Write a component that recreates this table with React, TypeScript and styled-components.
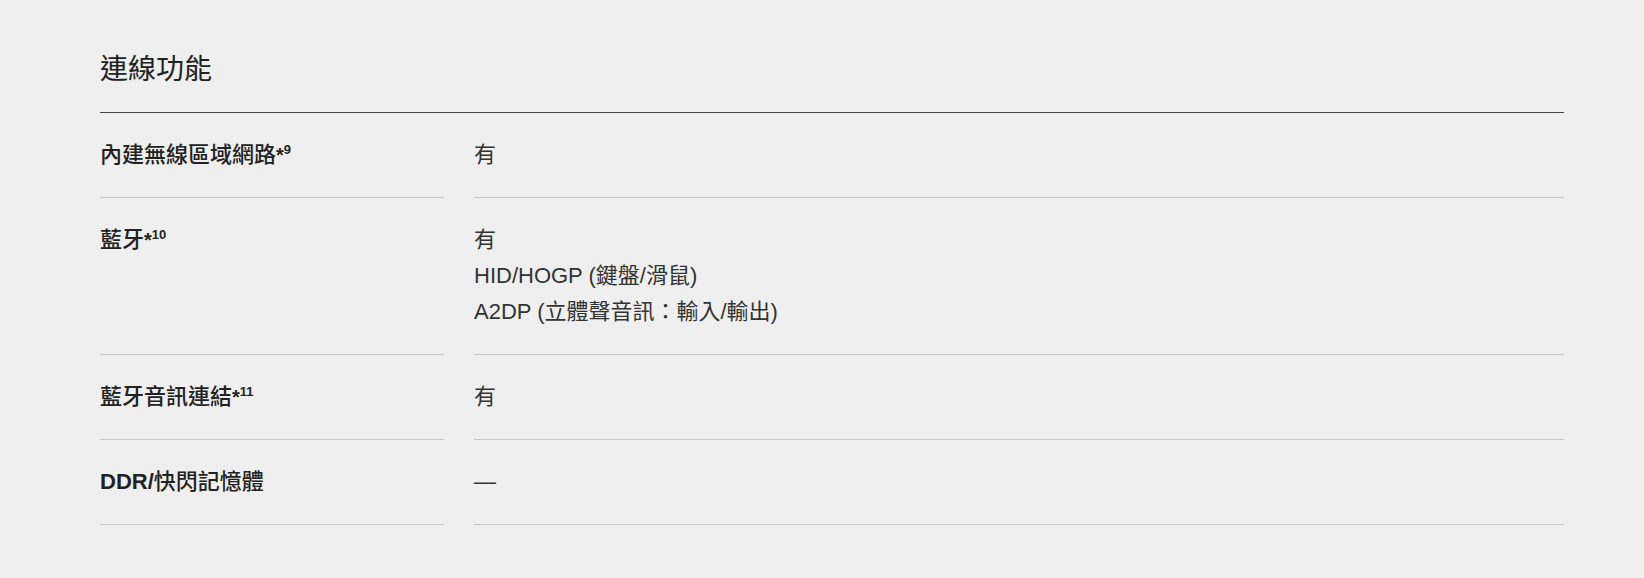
import React from 'react';
import styled, { createGlobalStyle } from 'styled-components';

const GlobalStyle = createGlobalStyle`
  html, body {
    margin: 0;
    padding: 0;
    background: #efefef;
  }

  body {
    font-family: "Liberation Sans", "Noto Sans CJK TC", sans-serif;
    color: #333;
  }
`;

interface Spec {
  label: React.ReactNode;
  note?: string;
  values: string[];
}

const specs: Spec[] = [
  { label: '內建無線區域網路', note: '9', values: ['有'] },
  { label: '藍牙', note: '10', values: ['有', 'HID/HOGP (鍵盤/滑鼠)', 'A2DP (立體聲音訊：輸入/輸出)'] },
  { label: '藍牙音訊連結', note: '11', values: ['有'] },
  { label: <><Latin>DDR/</Latin>快閃記憶體</>, values: ['—'] }
];

function Latin ({ children }: { children: React.ReactNode }): React.ReactElement {
  return <LatinText>{children}</LatinText>;
}

function App (): React.ReactElement {
  return (
    <Page>
      <GlobalStyle />
      <Section>
        <Heading>連線功能</Heading>
        <SpecGrid>
          {specs.map((spec, i) => (
            <React.Fragment key={i}>
              <Cell>
                <Label>
                  {spec.label}
                  {spec.note && (
                    <Note>
                      <Star>*</Star>
                      <sup>{spec.note}</sup>
                    </Note>
                  )}
                </Label>
              </Cell>
              <Cell>
                {spec.values.map((v) => (
                  <ValueLine key={v}>{v}</ValueLine>
                ))}
              </Cell>
            </React.Fragment>
          ))}
        </SpecGrid>
      </Section>
    </Page>
  );
}

export default App;

const Page = styled.div`
  padding: 52px 80px 40px 100px;
`;

const Section = styled.section`
  display: flex;
  flex-direction: column;
`;

const Heading = styled.h2`
  margin: 0;
  padding-bottom: 24px;
  border-bottom: 1px solid #444;
  font-size: 28px;
  font-weight: 400;
  line-height: 36px;
  height: 36px;
  color: #222;
`;

const SpecGrid = styled.div`
  display: grid;
  grid-template-columns: 344px 1fr;
  column-gap: 30px;
`;

const Cell = styled.div`
  display: flex;
  flex-direction: column;
  padding: 24px 0;
  border-bottom: 1px solid #c8c8c8;
  font-size: 22px;
  line-height: 36px;
`;

const Label = styled.div`
  height: 36px;
  color: #222;
  font-weight: 500;
`;

const LatinText = styled.span`
  font-weight: 700;
`;

const Note = styled.span`
  font-weight: 700;

  sup {
    font-size: 13px;
    line-height: 0;
    vertical-align: 8px;
  }
`;

const Star = styled.span`
  font-size: 20px;
`;

const ValueLine = styled.div`
  height: 36px;
  color: #333;
`;
